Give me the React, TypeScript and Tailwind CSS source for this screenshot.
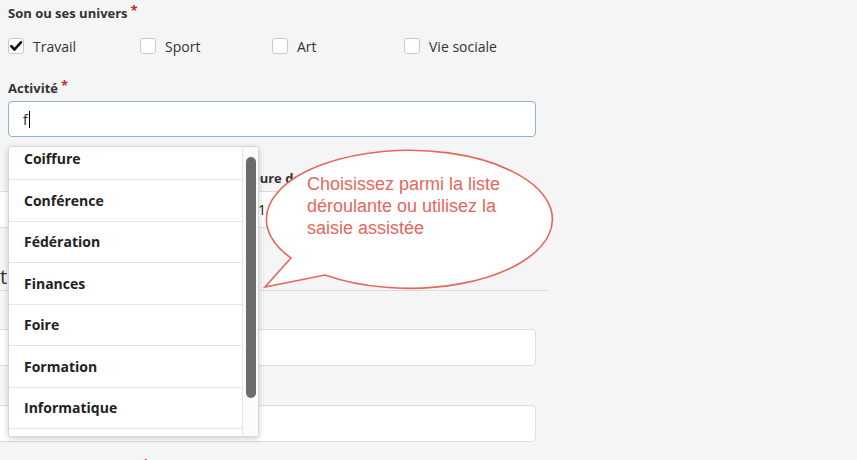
import React from 'react'

const options = ['Coiffure', 'Conférence', 'Fédération', 'Finances', 'Foire', 'Formation', 'Informatique', 'Jardinage']
const univers = ['Travail', 'Sport', 'Art', 'Vie sociale']

function Star() {
  return <span className="relative -top-[3px] ml-[3px] text-[#c22a2a]">*</span>
}

function Label({ children, required }: { children: React.ReactNode; required?: boolean }) {
  return (
    <div className="h-5 leading-5 text-[13px] font-bold text-[#333]">
      {children}
      {required ? <Star /> : null}
    </div>
  )
}

function Checkbox({ checked }: { checked?: boolean }) {
  return (
    <span className="flex h-4 w-4 shrink-0 items-center justify-center rounded-[3px] border border-[#c9c9c9] bg-white">
      {checked ? (
        <svg width="14" height="14" viewBox="0 0 16 16" fill="none">
          <path d="M2.6 8.2 L6.3 12 L13.6 3.8" stroke="#111" strokeWidth="3" strokeLinecap="round" strokeLinejoin="round" />
        </svg>
      ) : null}
    </span>
  )
}

function Bubble() {
  return (
    <>
      <svg className="absolute left-[262px] top-[146px]" width="294" height="146" viewBox="0 0 294 146">
        <path
          d="M29 112 L3 141 L63 129 A143 69 0 1 0 29 112 Z"
          fill="#fff"
          stroke="#e4675b"
          strokeWidth="1.6"
          strokeLinejoin="miter"
        />
      </svg>
      <div className="absolute left-[307px] top-[173px] font-['Liberation_Sans',Arial,sans-serif] text-[18px] leading-[22px] text-[#e4675b]">
        Choisissez parmi la liste
        <br />
        déroulante ou utilisez la
        <br />
        saisie assistée
      </div>
    </>
  )
}

function Dropdown() {
  return (
    <div className="absolute left-2 top-[146px] flex h-[291px] w-[251px] overflow-hidden rounded-[3px] border border-[#d6d6d6] bg-white shadow-[0_2px_6px_rgba(0,0,0,0.18)]">
      <div className="flex-1 overflow-hidden">
        <ul className="-mt-[8.5px]">
          {options.map((o) => (
            <li key={o} className="flex h-[41.5px] items-center border-b border-[#e6e6e6] pl-[15px] text-[14px] font-bold text-[#222]">
              {o}
            </li>
          ))}
        </ul>
      </div>
      <div className="flex w-4 justify-center border-l border-[#e6e6e6] bg-[#fbfbfb]">
        <div className="mt-[10px] h-[241px] w-[10px] rounded-full bg-[#6c6c6c]" />
      </div>
    </div>
  )
}

export default function App() {
  return (
    <div className="relative h-[460px] w-[857px] overflow-hidden bg-[#f5f5f5] font-['Open_Sans',sans-serif] text-[#333]">
      <div className="w-[536px] pl-2 pt-[3px]">
        <Label required>Son ou ses univers</Label>

        <div className="mt-[15px] flex h-4 items-center">
          {univers.map((u, i) => (
            <label key={u} className="flex w-[132px] items-center gap-[9px] text-[14px] text-[#333]">
              <Checkbox checked={i === 0} />
              {u}
            </label>
          ))}
        </div>

        <div className="mt-6">
          <Label required>Activité</Label>
        </div>
        <div className="mt-[3px] flex h-9 items-center rounded-[4px] border border-[#8fb4cc] bg-white px-[14px] text-[14px] text-[#222]">
          f<span className="ml-[1px] inline-block h-[17px] w-px bg-black" />
        </div>

        {/* underlying rows, mostly hidden by the dropdown */}
        <div className="-ml-[10px] mt-[31px] flex gap-3">
          <div className="w-[232px]">
            <div className="pl-[24px]">
              <Label>Date</Label>
            </div>
            <div className="mt-[3px] h-[37px] rounded-[4px] border border-[#dcdcdc] bg-white" />
          </div>
          <div className="flex-1">
            <Label>Heure de début</Label>
            <div className="mt-[3px] flex h-[37px] items-center rounded-[4px] border border-[#dcdcdc] bg-white pl-[15px] text-[14px] text-[#222]">
              1
            </div>
          </div>
        </div>

        <div className="-ml-2 mt-[35px] h-[28px] w-[549px] border-b border-[#dddddd] text-[20px] leading-[27px] text-[#333]">
          t
        </div>

        <div className="-ml-[10px] mt-[15px]">
          <div className="pl-[10px]">
            <Label>Lieu</Label>
          </div>
          <div className="mt-[3px] h-[37px] rounded-[4px] border border-[#dcdcdc] bg-white" />
        </div>

        <div className="-ml-[10px] mt-4">
          <div className="pl-[10px]">
            <Label>Adresse</Label>
          </div>
          <div className="mt-[3px] h-[37px] rounded-[4px] border border-[#dcdcdc] bg-white" />
        </div>

        <div className="mt-[15px]">
          <Label required>Lieu de l'événement</Label>
        </div>
      </div>

      <Dropdown />
      <Bubble />
    </div>
  )
}
